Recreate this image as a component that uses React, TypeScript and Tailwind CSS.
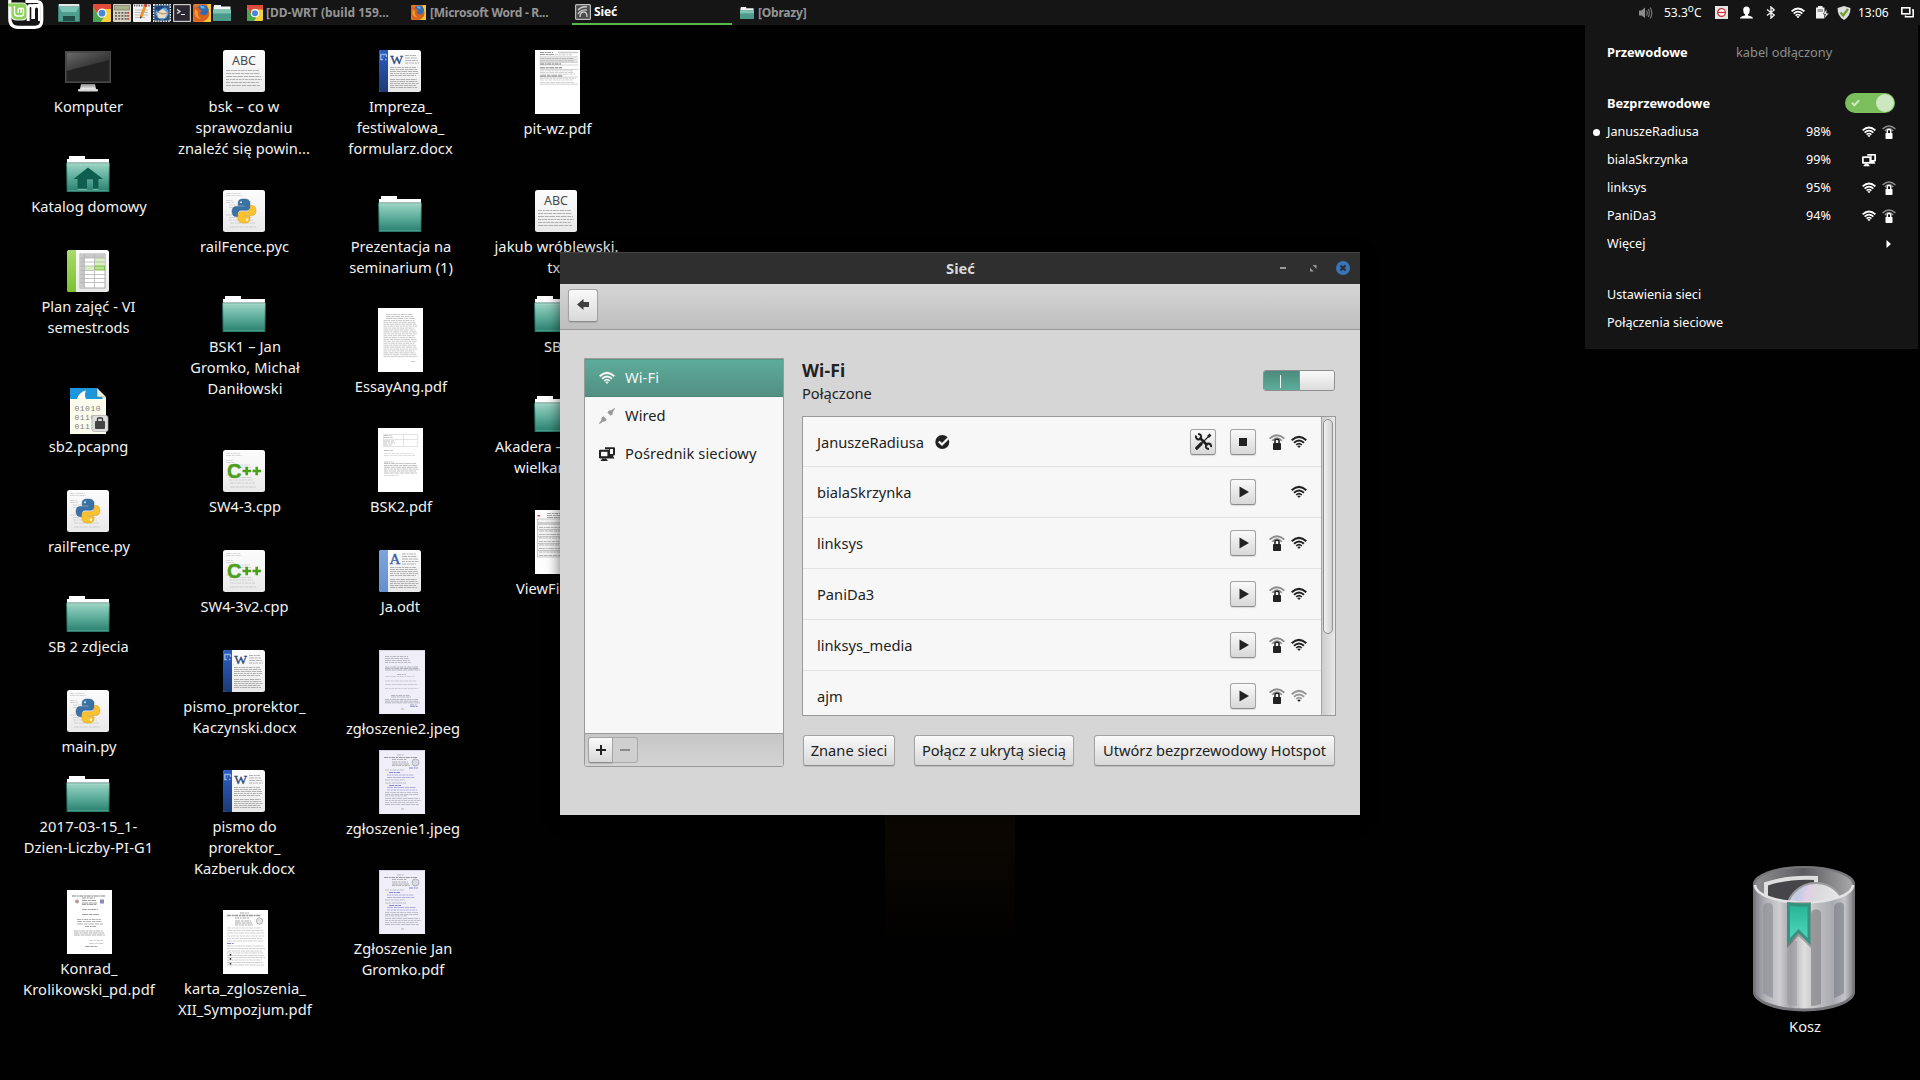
import type { ReactNode } from "react";

const DARK = "#222";

/* ---------- symbolic icons ---------- */

function Wifi({ size, color, weak = false }: { size: number; color: string; weak?: boolean }) {
  return (
    <svg width={size} height={size} viewBox="0 0 16 16" fill="none" stroke={color} className="shrink-0">
      <path d="M0.7 6.2 Q8 -0.4 15.3 6.2" strokeWidth="2.1" opacity={weak ? 0.45 : 1} />
      <path d="M3 8.7 Q8 4.2 13 8.7" strokeWidth="1.9" opacity={weak ? 0.45 : 1} />
      <path d="M5.2 11 Q8 8.4 10.8 11" strokeWidth="1.7" opacity={weak ? 0.45 : 1} />
      <path d="M6.2 12 L8 14 L9.8 12 Q8 10.8 6.2 12Z" fill={color} stroke="none" />
    </svg>
  );
}

function WifiLock({ size, color }: { size: number; color: string }) {
  return (
    <svg width={size} height={size} viewBox="0 0 16 16" fill="none" className="shrink-0">
      <path d="M0.6 4.6 Q8 -2.2 15.4 4.6" stroke={color} strokeWidth="1.8" opacity="0.5" />
      <path d="M3.2 6.8 Q8 1.4 12.8 6.8" stroke={color} strokeWidth="1.7" opacity="0.5" />
      <path d="M6 10 V6.2 Q6 5.2 8 5.2 Q10 5.2 10 6.2 V10" stroke={color} strokeWidth="1.6" />
      <rect x="4" y="9" width="8" height="7" rx="0.8" fill={color} />
    </svg>
  );
}

function Screens({ size, color, bg }: { size: number; color: string; bg: string }) {
  return (
    <svg width={size} height={size} viewBox="0 0 16 16" className="shrink-0">
      <path d="M6 1.2 H15 Q16 1.2 16 2.2 V8.6 Q16 9.6 15 9.6 H13.8 L15.4 12.4 H10 V3.2 H6Z" fill={color} />
      <rect x="11" y="3" width="3" height="5" fill={bg} />
      <rect x="0" y="3.8" width="10.4" height="8.6" rx="1.2" fill={color} />
      <rect x="2" y="5.8" width="6.4" height="4.4" fill={bg} />
      <path d="M3.4 12.4 H7 L9 15 H1.4Z" fill={color} />
    </svg>
  );
}

/* ---------- desktop icons ---------- */

function Folder({ home = false }: { home?: boolean }) {
  return (
    <svg width="46" height="37" viewBox="0 0 46 37">
      <defs>
        <linearGradient id="fold" x1="0" y1="0" x2="0" y2="1">
          <stop offset="0" stopColor="#9bd3c3" />
          <stop offset="0.5" stopColor="#5fae9c" />
          <stop offset="1" stopColor="#2c8170" />
        </linearGradient>
      </defs>
      <path d="M4 0 H20 V3 H44 V7 H2 V3 H4Z" fill="#fff" />
      <path d="M2 6 H44 V6.8 H2Z" fill="#c9c9c9" />
      <path d="M1 6.8 H45 L44.3 36 H1.7Z" fill="#2c7566" />
      <path d="M2 7.6 H44 L43.3 35 H2.7Z" fill="url(#fold)" />
      <path d="M2 7.9 H44" stroke="#b9e4d8" strokeWidth="0.8" />
      <path d="M3 34.6 H43" stroke="#51a996" strokeWidth="0.8" />
      {home && (
        <>
          <path d="M23 11.5 L38 23 H33.5 V33 H28 V24.5 H22 V33 H12.5 V23 H8.5Z" fill="#0f5f50" />
          <path d="M12.5 33.3 H22 M28 33.3 H33.5 M22 24 H28" stroke="#a5dccd" strokeWidth="0.7" fill="none" />
        </>
      )}
    </svg>
  );
}

function Monitor() {
  return (
    <svg width="46" height="41" viewBox="0 0 46 41">
      <defs>
        <linearGradient id="scr" x1="0" y1="0" x2="1" y2="1">
          <stop offset="0" stopColor="#6a6a6a" />
          <stop offset="0.6" stopColor="#3a3a3a" />
          <stop offset="1" stopColor="#262626" />
        </linearGradient>
        <linearGradient id="stand" x1="0" y1="0" x2="0" y2="1">
          <stop offset="0" stopColor="#888" />
          <stop offset="1" stopColor="#f2f2f2" />
        </linearGradient>
      </defs>
      <rect width="46" height="32" fill="#4a4a4a" />
      <rect x="1.5" y="1.5" width="43" height="29" fill="#222" />
      <path d="M1.5 1.5 H44.5 V9 L1.5 20Z" fill="url(#scr)" />
      <path d="M16 33 H30 L31 38 H15Z" fill="url(#stand)" />
      <rect x="13" y="38" width="20" height="2.4" rx="1" fill="#d8d8d8" />
    </svg>
  );
}

function Paper({ children, stripe }: { children: ReactNode; stripe?: [string, string] }) {
  return (
    <svg width="42" height="42" viewBox="0 0 42 42">
      <defs>
        <linearGradient id="pap" x1="0" y1="0" x2="0" y2="1">
          <stop offset="0" stopColor="#fdfdfd" />
          <stop offset="1" stopColor="#e9e9e9" />
        </linearGradient>
        {stripe && (
          <linearGradient id={"st" + stripe[0].slice(1)} x1="0" y1="0" x2="0" y2="1">
            <stop offset="0" stopColor={stripe[0]} />
            <stop offset="1" stopColor={stripe[1]} />
          </linearGradient>
        )}
      </defs>
      <rect width="42" height="42" rx="2.5" fill="url(#pap)" />
      {stripe && <path d="M9 0 H2.5 Q0 0 0 2.5 V39.5 Q0 42 2.5 42 H9Z" fill={`url(#st${stripe[0].slice(1)})`} />}
      {children}
    </svg>
  );
}

function Rows({ x, w, ys, color = "#a8a8a8", h = 0.9, seed = 1 }: { x: number; w: number; ys: number[]; color?: string; h?: number; seed?: number }) {
  return (
    <>
      {ys.map((y, i) => (
        <path key={y} d={`M${x} ${y} H${x + w - (((i + seed) * 7) % 4)}`} stroke={color} strokeWidth={h} strokeDasharray={`${3 + ((i * 5 + seed) % 4)} 0.7 ${2 + (i % 3)} 0.6`} />
      ))}
    </>
  );
}

function AbcIcon() {
  return (
    <Paper>
      <text x="21" y="15" textAnchor="middle" fontSize="12.5" fontFamily="Noto Sans, sans-serif" fill="#4a4a4a">ABC</text>
      <Rows x={3} w={36} ys={[20.5, 23.5, 26.5, 29.5, 32.5, 35.5]} />
    </Paper>
  );
}

function WordIcon() {
  return (
    <Paper stripe={["#2b5fc4", "#1d3a75"]}>
      <path d="M7.5 4.5 H1.8 V9.5 H4 M7.5 4.5 V7 M5 7 H4.5 M6 9.5 H7.5" stroke="#8fb0ea" strokeWidth="1.4" fill="none" />
      <text x="17.5" y="14" textAnchor="middle" fontSize="13.5" fontFamily="Liberation Serif, serif" fill="#27457f" stroke="#27457f" strokeWidth="0.3">W</text>
      <Rows x={26} w={14} ys={[5.5, 8, 10.5, 13]} h={0.8} color="#a0a0a0" />
      <Rows x={11} w={29} ys={[17.5, 19.5, 21.5, 23.5, 25.5, 29.5, 31.5, 33.5, 35.5, 37.5]} h={0.8} color="#a0a0a0" />
    </Paper>
  );
}

function OdtIcon() {
  return (
    <Paper stripe={["#7ea4de", "#6490d0"]}>
      <text x="16" y="14" textAnchor="middle" fontSize="15" fontFamily="Liberation Serif, serif" fill="#3561a8" stroke="#3561a8" strokeWidth="0.4">A</text>
      <Rows x={23} w={17} ys={[4, 6.5, 9, 11.5, 14]} h={0.8} color="#a0a0a0" />
      <Rows x={11} w={29} ys={[17.5, 19.5, 21.5, 23.5, 25.5, 29.5, 31.5, 33.5, 35.5, 37.5]} h={0.8} color="#a0a0a0" />
    </Paper>
  );
}

function OdsIcon() {
  return (
    <Paper stripe={["#a8dc6c", "#7dc02f"]}>
      <rect x="13" y="4" width="25" height="34" fill="#fff" stroke="#aaa" />
      <rect x="13.5" y="4.5" width="24" height="3.5" fill="#c6c6c6" />
      <rect x="13.5" y="8" width="4" height="29.5" fill="#c6c6c6" />
      <rect x="27.5" y="8" width="10" height="8" fill="#d8f0bd" />
      <rect x="17.5" y="16" width="10" height="4" fill="#d8f0bd" />
      <rect x="27.8" y="16" width="9.7" height="4" fill="#b6e38a" stroke="#6fae3a" strokeWidth="0.8" />
      <path d="M13 8 H38 M13 12 H38 M13 16 H27 M13 20.5 H27 M13 24.5 H38 M13 28.5 H38 M13 32.5 H38 M17.5 4 V38 M27.5 4 V38" stroke="#b5b5b5" strokeWidth="0.8" />
    </Paper>
  );
}

function CodeLines() {
  return (
    <g opacity="0.6">
      <Rows x={3} w={18} ys={[3.5, 5.5]} h={0.7} />
      <Rows x={3} w={10} ys={[10.5, 12.5, 25]} h={0.7} />
      <Rows x={6} w={24} ys={[15, 17.5, 27.5, 30]} h={0.7} />
      <Rows x={7} w={28} ys={[33, 37]} h={0.7} />
    </g>
  );
}

function PyIcon() {
  return (
    <Paper>
      <CodeLines />
      <g transform="translate(9 9)">
        <path d="M11.8 0 C7 0 6.2 1.8 6.2 4 V6.5 H12.5 V7.5 H4 C1.5 7.5 0 9.5 0 12.5 C0 15.5 1.5 17.5 4 17.5 H5.8 V14.5 C5.8 12.5 7.3 11.2 9.2 11.2 H15 C17 11.2 18 10 18 8 V4 C18 1.5 16 0 11.8 0Z" fill="#3a72a5" stroke="#2a5a88" strokeWidth="0.5" />
        <path d="M12.2 24 C17 24 17.8 22.2 17.8 20 V17.5 H11.5 V16.5 H20 C22.5 16.5 24 14.5 24 11.5 C24 8.5 22.5 6.5 20 6.5 H18.2 V9.5 C18.2 11.5 16.7 12.8 14.8 12.8 H9 C7 12.8 6 14 6 16 V20 C6 22.5 8 24 12.2 24Z" fill="#fcc331" stroke="#d9961c" strokeWidth="0.5" />
        <circle cx="9" cy="3.3" r="1" fill="#d9e7f4" />
        <circle cx="15" cy="20.7" r="1.2" fill="#fff6d8" />
      </g>
    </Paper>
  );
}

function CppIcon() {
  return (
    <Paper>
      <CodeLines />
      <text x="4" y="28" fontSize="20" fontWeight="700" fontFamily="Liberation Sans, sans-serif" fill="#4ba01a" stroke="#4ba01a" strokeWidth="0.4">C</text>
      <path d="M19.5 21 H28 M23.7 16.8 V25.2 M29.5 21 H38 M33.7 16.8 V25.2" stroke="#4ba01a" strokeWidth="2.6" />
    </Paper>
  );
}

function PcapIcon() {
  return (
    <svg width="40" height="46" viewBox="0 0 40 46">
      <path d="M0 0 H27 L36 9 V46 H0Z" fill="#fdfdee" />
      <path d="M0 0 H27 L33 11 H0Z" fill="#1e96dc" />
      <path d="M7 11 Q9 4 16 2.5 Q14 7 16 11Z" fill="#fff" />
      <path d="M27 0 V9 H36Z" fill="#e8f0dc" stroke="#555" strokeWidth="0.4" />
      <g fontFamily="Liberation Mono, monospace" fontSize="8" fill="#7d7d7d">
        <text x="4.5" y="22.5" textLength="26">01010</text>
        <text x="4.5" y="31.5" textLength="26">01101</text>
        <text x="4.5" y="40.5" textLength="26">01110</text>
      </g>
      <rect x="22" y="27.5" width="16" height="16" rx="2" fill="#dedede" stroke="#aaa" strokeWidth="0.7" />
      <path d="M27.5 34 V31 Q27.5 30 28.5 30 H31.5 Q32.5 30 32.5 31 V34" stroke="#333" strokeWidth="1.3" fill="none" />
      <rect x="25" y="33" width="10" height="8" rx="1" fill="#444" />
    </svg>
  );
}

type ThumbKind = "konrad" | "karta" | "essay" | "bsk" | "pit" | "view" | "scan2" | "scan1";

const range = (a: number, b: number, s: number) => {
  const r: number[] = [];
  for (let v = a; v <= b; v += s) r.push(Math.round(v * 10) / 10);
  return r;
};

function Thumb({ kind }: { kind: ThumbKind }) {
  const scan = kind === "scan1" || kind === "scan2";
  const w = scan ? 46 : 45;
  return (
    <svg width={w} height="64" viewBox={`0 0 ${w} 64`}>
      <rect width={w} height="64" fill={scan ? "#efeef9" : "#fff"} />
      {scan && <path d={`M0 0.5 H${w} M0.5 0 V64`} stroke="#d4d3e2" />}
      {kind === "konrad" && (
        <>
          <Rows x={5} w={36} ys={[6]} h={1.3} color="#aaa" />
          <Rows x={15} w={16} ys={[8, 10.5, 13]} h={1} color="#999" />
          <circle cx="10" cy="11.5" r="2" fill="#b99" />
          <rect x="33" y="9.5" width="4" height="4" fill="#88b" />
          <Rows x={15} w={18} ys={[14.5, 19.5, 24.5]} h={0.9} color="#999" />
          <Rows x={10} w={27} ys={[29.5, 31.5, 34]} h={1} color="#b0b0b0" />
          <Rows x={18} w={14} ys={[36.5, 56.5]} h={1} color="#a5a5a5" />
          <Rows x={7} w={32} ys={[41, 43, 45]} h={1} color="#b0b0b0" />
          <Rows x={22} w={17} ys={[50.5, 53.5]} h={0.7} color="#bbb" />
        </>
      )}
      {kind === "essay" && (
        <>
          <Rows x={8} w={30} ys={[6.5, 8.5, 10.5]} h={1.1} color="#c4c4c4" />
          <Rows x={5.5} w={34} ys={range(12.5, 50, 1.9)} h={1} color="#c8c8c8" />
          <Rows x={33} w={8} ys={[53.5]} h={0.8} color="#bbb" />
        </>
      )}
      {kind === "bsk" && (
        <>
          <path d="M5.5 6.5 H39.5 V18.5 H5.5Z M25.5 6.5 V18.5 M5.5 11.5 H39.5" stroke="#d2d2d2" strokeWidth="0.6" fill="none" />
          <Rows x={6} w={11} ys={[7.5, 9.5, 13, 15, 17, 22.5, 34]} h={0.7} color="#aaa" />
          <Rows x={6} w={33} ys={[25.5, 27.5]} h={0.7} color="#d0d0d0" />
          <Rows x={6} w={35} ys={[35.5, 37.5, 39.3, 41.1, 43, 45]} h={1} color="#c0c0c0" />
          <Rows x={6} w={18} ys={[47.5]} h={0.7} color="#c9c9c9" />
        </>
      )}
      {kind === "pit" && (
        <>
          <Rows x={5} w={16} ys={[2.5, 4.5]} h={0.9} color="#888" />
          <rect x="23" y="1.7" width="20" height="1.6" fill="#ccc" />
          <Rows x={12} w={28} ys={[4.8]} h={0.8} color="#bbb" />
          <rect x="4.5" y="7.5" width="38" height="4.5" fill="#e2e2e2" />
          <Rows x={5} w={36} ys={[8.5, 10.8]} h={0.8} color="#b0b0b0" />
          <path d="M4.5 6.8 H43 M4.5 12.5 H43 M4.5 15 H43 M4.5 19.5 H43 M4.5 27 H43 M4.5 34.2 H43" stroke="#b5b5b5" strokeWidth="0.6" />
          <Rows x={5} w={24} ys={[14, 17.8, 26]} h={1} color="#777" />
          <Rows x={5} w={36} ys={[20.8, 22.5, 24.2, 28.4, 30, 32.5]} h={0.7} color="#bbb" />
        </>
      )}
      {kind === "view" && (
        <>
          <rect x="2.5" y="9" width="40" height="38" fill="#f5f5f5" stroke="#aaa" strokeWidth="0.6" />
          <Rows x={12} w={28} ys={[3.5, 5.5, 7.5]} h={0.9} color="#999" />
          <rect x="2.5" y="12" width="40" height="3" fill="#d0d0d0" />
          <Rows x={4} w={37} ys={[17.5, 21, 24.5, 28, 31.5, 35, 38.5, 42, 45.5]} h={1} color="#b5b5b5" />
          <path d="M3 19.5 H42 M3 26.5 H42 M3 33.5 H42 M3 40.5 H42" stroke="#999" strokeWidth="0.5" />
          <rect x="2.5" y="5" width="2.5" height="1.5" fill="#d44" />
        </>
      )}
      {kind === "karta" && (
        <>
          <Rows x={17} w={12} ys={[3]} h={0.9} color="#999" />
          <Rows x={4} w={37} ys={[5.5]} h={1.3} color="#999" />
          <Rows x={12} w={18} ys={[8, 11, 13, 15]} h={1} color="#aaa" />
          <circle cx="36.5" cy="11" r="3.2" fill="#e4e4e4" stroke="#aaa" strokeWidth="0.8" />
          <Rows x={4} w={38} ys={[18, 20.5, 23, 26, 28.5, 31, 36, 38.5, 41, 43, 45.5, 47.5, 50, 52.5, 55]} h={0.8} color="#c0c0c0" />
          <Rows x={4} w={10} ys={[33.5]} h={1.1} color="#88c" />
          <path d="M7.5 44 V45.5 M7.5 48 V49.8 M7.5 53 V54.5" stroke="#222" strokeWidth="1.4" />
        </>
      )}
      {kind === "scan2" && (
        <>
          <Rows x={6} w={26} ys={[6.5, 8.5, 10.5, 12.5]} h={0.8} color="#aaaab4" />
          <Rows x={6} w={36} ys={[17, 18.5, 20]} h={1.1} color="#b2b2bc" />
          <Rows x={18} w={12} ys={[24.5]} h={0.8} color="#aaaab4" />
          <Rows x={6} w={33} ys={[26.5, 31, 34.5, 38.5]} h={0.7} color="#bcbcc6" />
          <Rows x={12} w={22} ys={[45.5, 47]} h={0.8} color="#aaaab4" />
          <Rows x={6} w={36} ys={[49.5, 51.2, 52.8]} h={0.9} color="#b2b2bc" />
          <Rows x={31} w={10} ys={[55, 56.5]} h={0.9} color="#99c" />
        </>
      )}
      {kind === "scan1" && (
        <>
          <Rows x={18} w={10} ys={[5]} h={0.8} color="#aaa" />
          <Rows x={5} w={36} ys={[7.5]} h={1.1} color="#999" />
          <Rows x={13} w={18} ys={[9.5, 12, 14, 15.5]} h={0.9} color="#aaa" />
          <circle cx="36.5" cy="12.5" r="3.5" fill="#d9d9e2" stroke="#aab" strokeWidth="0.9" />
          <Rows x={30} w={12} ys={[18]} h={1} color="#88c" />
          <Rows x={6} w={22} ys={[20, 30, 33, 46]} h={0.8} color="#b0b0ba" />
          <Rows x={10} w={14} ys={[22.5, 35.5]} h={1} color="#88c" />
          <Rows x={8} w={30} ys={[25, 27.5, 37.5, 40]} h={0.9} color="#a8a8d4" />
          <Rows x={6} w={36} ys={[42.5, 44.5, 48.5, 50.5, 52.5, 54.5]} h={0.8} color="#b0b0ba" />
        </>
      )}
      {scan && <path d="M22 59 H25" stroke="#aaa" strokeWidth="0.8" />}
    </svg>
  );
}

function TrashBin() {
  return (
    <svg width="102" height="146" viewBox="0 0 102 146">
      <defs>
        <linearGradient id="bin" x1="0" y1="0" x2="1" y2="0">
          <stop offset="0" stopColor="#85868b" />
          <stop offset="0.1" stopColor="#b0b0b6" />
          <stop offset="0.25" stopColor="#cfcfd2" />
          <stop offset="0.36" stopColor="#a4a4a9" />
          <stop offset="0.5" stopColor="#e0e0e1" />
          <stop offset="0.62" stopColor="#c2c2c5" />
          <stop offset="0.8" stopColor="#a9aab0" />
          <stop offset="0.92" stopColor="#c4c4c8" />
          <stop offset="1" stopColor="#8b8b90" />
        </linearGradient>
        <linearGradient id="inner" x1="0" y1="0" x2="1" y2="0">
          <stop offset="0" stopColor="#8e8e90" />
          <stop offset="0.5" stopColor="#5c5c60" />
          <stop offset="1" stopColor="#a8a8aa" />
        </linearGradient>
        <linearGradient id="disc" x1="0" y1="0" x2="1" y2="0.3">
          <stop offset="0" stopColor="#d7d7dc" />
          <stop offset="0.25" stopColor="#c3cbe4" />
          <stop offset="0.38" stopColor="#e6cfe4" />
          <stop offset="0.5" stopColor="#d9d9dd" />
          <stop offset="1" stopColor="#ececec" />
        </linearGradient>
        <linearGradient id="rib" x1="0" y1="0" x2="0" y2="1">
          <stop offset="0" stopColor="#27b597" />
          <stop offset="1" stopColor="#4fd6bb" />
        </linearGradient>
        <clipPath id="mouth">
          <path d="M3 18 A48 16 0 0 1 99 18 V19 A48 17 0 0 1 3 19Z" />
        </clipPath>
      </defs>
      <path d="M0 18 A51 18 0 0 1 102 18 V126 A51 19.5 0 0 1 0 126Z" fill="#77777b" />
      <path d="M2.5 18 V125 A48.5 17.5 0 0 0 99.5 125 V18Z" fill="url(#bin)" />
      <ellipse cx="51" cy="19" rx="48.5" ry="17" fill="url(#inner)" />
      <g clipPath="url(#mouth)">
        <path d="M13 40 V18 Q35 10.5 63 12 V40" fill="#45454a" stroke="#dedede" strokeWidth="4" />
        <circle cx="63" cy="47" r="30" fill="url(#disc)" stroke="#9b9b9e" strokeWidth="2" />
      </g>
      <path d="M2 19 A49 17.5 0 0 0 100 19" fill="none" stroke="#e4e4e6" strokeWidth="2.5" />
      <path d="M10 42 Q10 37 15 37 Q20 37 20 42 V132 Q14 130 10 127Z" fill="#8e8f96" opacity="0.65" />
      <path d="M58 48 Q58 43.5 63 43.5 Q68 43.5 68 48 V138 Q62 140 58 140Z" fill="#858589" opacity="0.7" />
      <path d="M34 75 H44 V140 Q38 139 34 138Z" fill="#9a9a9e" opacity="0.5" />
      <path d="M81 42 Q81 37 86 36.5 Q91 36 91 40 V127 Q87 130 81 132Z" fill="#7d7f88" opacity="0.65" />
      <path d="M34 36 H58 V82 L45.5 70 L34 82Z" fill="#000" opacity="0.25" />
      <path d="M34 36 Q45 38 57.5 37 V79 L45.5 67 L34 79Z" fill="#37917f" />
      <path d="M37 40 Q45 41 54.5 40.5 V72 L45.5 63 L37 72Z" fill="url(#rib)" />
    </svg>
  );
}

/* ---------- desktop items ---------- */

type Item = { x: number; y: number; cx: number; base: number; lines: string[]; starts?: number[]; track?: number; icon: ReactNode };

const ITEMS: Item[] = [
  { x: 65, y: 51, cx: 88.5, base: 112, lines: ["Komputer"], icon: <Monitor /> },
  { x: 65, y: 156, cx: 89, base: 212, lines: ["Katalog domowy"], icon: <Folder home /> },
  { x: 67, y: 250, cx: 88.5, base: 312, lines: ["Plan zajęć - VI", "semestr.ods"], icon: <OdsIcon /> },
  { x: 70, y: 388, cx: 88.5, base: 452, lines: ["sb2.pcapng"], icon: <PcapIcon /> },
  { x: 67, y: 490, cx: 89, base: 552, lines: ["railFence.py"], icon: <PyIcon /> },
  { x: 65, y: 596, cx: 88.5, base: 652, lines: ["SB 2 zdjecia"], icon: <Folder /> },
  { x: 67, y: 690, cx: 89, base: 752, lines: ["main.py"], icon: <PyIcon /> },
  { x: 65, y: 776, cx: 88.5, base: 832, track: 0.13, lines: ["2017-03-15_1-", "Dzien-Liczby-PI-G1"], icon: <Folder /> },
  { x: 67, y: 890, cx: 89, base: 974, track: 0.15, lines: ["Konrad_", "Krolikowski_pd.pdf"], icon: <Thumb kind="konrad" /> },
  { x: 223, y: 50, cx: 244, base: 112, track: 0.08, lines: ["bsk – co w", "sprawozdaniu", "znaleźć się powin..."], icon: <AbcIcon /> },
  { x: 223, y: 190, cx: 244.5, base: 252, lines: ["railFence.pyc"], icon: <PyIcon /> },
  { x: 221, y: 296, cx: 245, base: 352, track: 0.08, lines: ["BSK1 – Jan", "Gromko, Michał", "Daniłowski"], icon: <Folder /> },
  { x: 223, y: 450, cx: 245, base: 512, lines: ["SW4-3.cpp"], icon: <CppIcon /> },
  { x: 223, y: 550, cx: 244.5, base: 612, lines: ["SW4-3v2.cpp"], icon: <CppIcon /> },
  { x: 223, y: 650, cx: 244.5, base: 712, track: 0.08, lines: ["pismo_prorektor_", "Kaczynski.docx"], icon: <WordIcon /> },
  { x: 223, y: 770, cx: 244.5, base: 832, lines: ["pismo do", "prorektor_", "Kazberuk.docx"], icon: <WordIcon /> },
  { x: 223, y: 910, cx: 245, base: 994, track: 0.08, lines: ["karta_zgloszenia_", "XII_Sympozjum.pdf"], icon: <Thumb kind="karta" /> },
  { x: 379, y: 50, cx: 400.5, base: 112, lines: ["Impreza_", "festiwalowa_", "formularz.docx"], icon: <WordIcon /> },
  { x: 377, y: 196, cx: 401, base: 252, lines: ["Prezentacja na", "seminarium (1)"], icon: <Folder /> },
  { x: 378, y: 308, cx: 401, base: 392, lines: ["EssayAng.pdf"], icon: <Thumb kind="essay" /> },
  { x: 378, y: 428, cx: 401, base: 512, lines: ["BSK2.pdf"], icon: <Thumb kind="bsk" /> },
  { x: 379, y: 550, cx: 400.5, base: 612, lines: ["Ja.odt"], icon: <OdtIcon /> },
  { x: 379, y: 650, cx: 403, base: 734, lines: ["zgłoszenie2.jpeg"], icon: <Thumb kind="scan2" /> },
  { x: 379, y: 750, cx: 403, base: 834, lines: ["zgłoszenie1.jpeg"], icon: <Thumb kind="scan1" /> },
  { x: 379, y: 870, cx: 403, base: 954, lines: ["Zgłoszenie Jan", "Gromko.pdf"], icon: <Thumb kind="scan1" /> },
  { x: 535, y: 50, cx: 557.5, base: 134, lines: ["pit-wz.pdf"], icon: <Thumb kind="pit" /> },
  { x: 535, y: 190, cx: 556.5, base: 252, track: 0.08, lines: ["jakub wróblewski.", "txt"], icon: <AbcIcon /> },
  { x: 533, y: 296, cx: 556.5, base: 352, lines: ["SB"], starts: [544], icon: <Folder /> },
  { x: 533, y: 396, cx: 556.5, base: 452, lines: ["Akadera –", "wielkan"], starts: [495, 514], icon: <Folder /> },
  { x: 535, y: 510, cx: 556.5, base: 594, lines: ["ViewFi"], starts: [516], icon: <Thumb kind="view" /> },
  { x: 1753, y: 866, cx: 1805, base: 1032, lines: ["Kosz"], icon: <TrashBin /> },
];

function DesktopItem({ item }: { item: Item }) {
  return (
    <>
      <div className="absolute" style={{ left: item.x, top: item.y }}>{item.icon}</div>
      {item.lines.map((line, i) => (
        <div
          key={line}
          className={item.starts ? "absolute whitespace-pre text-[14.67px] leading-[21px] text-[#f2f2f2]" : "absolute -translate-x-1/2 whitespace-pre text-[14.67px] leading-[21px] text-[#f2f2f2]"}
          style={{ left: item.starts ? item.starts[i] : item.cx, top: item.base - 16 + i * 21, letterSpacing: item.track }}
        >
          {line}
        </div>
      ))}
    </>
  );
}

/* ---------- top panel ---------- */

function MintLogo() {
  return (
    <svg width="36" height="30" viewBox="0 0 36 30">
      <path d="M1.800 -3 V18 Q1.800 27.300 10 27.300 H27 Q33.700 27.300 33.700 20.500 V7 Q33.700 1.500 28 1.500 H19 V-3Z" fill="#151515" stroke="#fff" strokeWidth="3.200" />
      <path d="M20.200 19 V8 Q20.200 5.500 22.500 5.500 Q24.800 5.500 24.800 8 V19 M20.200 17 V21" fill="none" stroke="#fff" strokeWidth="3" />
      <path d="M24.500 4 H32 V21 H30 V9.500 Q30 7.500 28.500 7.500 Q27 7.500 27 9.500 V19 H24.500Z" fill="#fff" />
      <path d="M-1 3 H14 Q19 3 19 8 V15 Q19 20 14 20 H9 Q3 20 3 14 V7 H-1Z" fill="#8ed05c" stroke="#e9f6df" strokeWidth="1.200" />
      <path d="M6.500 6 V13 Q6.500 16 9.500 16 H13 Q15.500 16 15.500 13.500 V9.500 Q15.500 8.300 14.200 8.300 Q13 8.300 13 9.500 V13 M13 9.500 Q13 8.300 11.500 8.300 Q10.200 8.300 10.200 9.500 V13" fill="none" stroke="#fff" strokeWidth="1.400" />
    </svg>
  );
}

function ShowDesktop() {
  return (
    <svg width="22" height="18" viewBox="0 0 22 18">
      <rect width="22" height="18" rx="1" fill="#3b7d70" />
      <rect x="1" y="0" width="20" height="2.5" fill="#e6e6e6" />
      <rect x="1" y="3" width="20" height="14" fill="#4f9f8e" />
      <path d="M1 3 H21 L18 8 H4Z" fill="#7cc4b3" />
      <rect x="5" y="12" width="12" height="5" fill="#1f4d45" />
    </svg>
  );
}

function Chrome({ size }: { size: number }) {
  return (
    <svg width={size} height={size} viewBox="0 0 18 18">
      <rect width="18" height="18" rx="1.5" fill="#f7cf3a" />
      <path d="M0 1.5 Q0 0 1.5 0 H16.5 Q18 0 18 1.5 V5 H9 L4.5 10 L0 3Z" fill="#e04b3b" />
      <path d="M0 3 L5 11 L11 13 L8 18 H1.5 Q0 18 0 16.5Z" fill="#4aa552" />
      <circle cx="9" cy="9.2" r="4.6" fill="#fff" />
      <circle cx="9" cy="9.2" r="3.4" fill="#4a86d8" />
    </svg>
  );
}

function Firefox({ size }: { size: number }) {
  return (
    <svg width={size} height={size} viewBox="0 0 18 18">
      <rect width="18" height="18" rx="1.5" fill="#e3762b" />
      <path d="M14 0 H18 V18 H10 Q17 14 14 0Z" fill="#f6c437" />
      <circle cx="9.5" cy="7" r="6.3" fill="#2f6cb4" />
      <path d="M7 1.5 Q11 1 12 4 Q10 5 8 4Z" fill="#6fb2e4" />
      <path d="M0 2 Q2 3 4 3 Q7 5 9 7 Q7 8 7 9.5 Q9 12 13 11 Q15 9.5 15.5 6 Q18 14 11 17 H3 Q0 14 0 10Z" fill="#d9601d" />
      <path d="M2 5 Q4 6 5 8 Q4 12 8 15 Q3 15 1.5 10Z" fill="#f19a2c" />
    </svg>
  );
}

function Calculator() {
  return (
    <svg width="18" height="18" viewBox="0 0 18 18">
      <rect width="18" height="18" rx="1" fill="#d9d2c3" />
      <rect x="1.5" y="1.5" width="15" height="4.5" fill="#a8b48c" stroke="#6f6b60" strokeWidth="0.6" />
      {[8, 11, 14].map((y) => [2, 5.2, 8.4, 11.6, 14.2].map((x) => <rect key={`${x}-${y}`} x={x} y={y} width="2" height="1.8" fill={x > 13 ? "#b4524a" : "#6a665e"} />))}
    </svg>
  );
}

function Editor() {
  return (
    <svg width="18" height="18" viewBox="0 0 18 18">
      <rect width="18" height="18" rx="1" fill="#f2f2f2" />
      <path d="M1 1.5 H17" stroke="#555" strokeWidth="2" strokeDasharray="1.2 1.2" />
      <path d="M2 6 H15 M2 8.5 H15 M2 11 H15 M2 13.5 H12" stroke="#b5b5b5" strokeWidth="0.9" />
      <path d="M12.5 1 L8 13" stroke="#f0922b" strokeWidth="2.8" />
      <path d="M7 15 L7.2 12.2 L9 13Z" fill="#333" />
      <path d="M13 0 L12.2 2.5" stroke="#c83c3c" strokeWidth="2.8" />
    </svg>
  );
}

function Mail() {
  return (
    <svg width="18" height="18" viewBox="0 0 18 18">
      <rect x="0.7" y="0.7" width="16.6" height="16.6" fill="#2d4f7c" stroke="#e8e8e8" strokeWidth="1.4" strokeDasharray="1.6 1" />
      <circle cx="9" cy="9" r="6.5" fill="#5ea1dc" />
      <path d="M4 8 L10 5 L14.500 9 L12 14 L5.5 14Z" fill="#ecdcc2" />
      <path d="M4 8 L10 10 L14.5 9" stroke="#9c8562" strokeWidth="0.9" fill="none" />
      <path d="M2 4 Q7 0 13 3 Q8 4 5 8Z" fill="#1c4379" />
    </svg>
  );
}

function Terminal() {
  return (
    <svg width="18" height="18" viewBox="0 0 18 18">
      <rect width="18" height="18" rx="1" fill="#c9c9c9" />
      <rect x="1.2" y="1.2" width="15.6" height="15.6" fill="#2c2733" />
      <path d="M4 5.5 L7 7.5 L4 9.5 M8 10.5 H12" stroke="#eee" strokeWidth="1.2" fill="none" />
    </svg>
  );
}

function MiniFolder({ w, h }: { w: number; h: number }) {
  return (
    <svg width={w} height={h} viewBox="0 0 18 16" preserveAspectRatio="none">
      <path d="M1 0 H8 V1.5 H17.5 V5 H0.5 V1.5 H1Z" fill="#f2f2f2" />
      <path d="M0 4.5 H18 V16 H0Z" fill="#4c9b8a" />
      <path d="M0 4.5 H18 V8.5 H0Z" fill="#7fc3b2" />
    </svg>
  );
}

function NetTool() {
  return (
    <svg width="16" height="16" viewBox="0 0 16 16">
      <rect x="0.6" y="0.6" width="14.8" height="14.8" rx="1" fill="#4b4b4b" stroke="#bdbdbd" strokeWidth="1.2" />
      <path d="M3 6 Q7 2 12 3 M3 10 Q6 5 12 6 M5 13 Q5 8 9 8 Q12 8 12 13" stroke="#c9c9c9" strokeWidth="1.4" fill="none" />
    </svg>
  );
}

function Panel() {
  return (
    <header className="absolute inset-x-0 top-0 flex h-[25px] items-center bg-[#151515] text-[12px] text-white">
      <div className="ml-[8px] h-[25px] w-[36px] shrink-0"><MintLogo /></div>
      <div className="ml-[14px]"><ShowDesktop /></div>
      <nav className="ml-[13px] flex items-center gap-[2px]">
        <Chrome size={18} />
        <Calculator />
        <Editor />
        <Mail />
        <Terminal />
        <Firefox size={18} />
        <MiniFolder w={18} h={16} />
      </nav>
      <div className="ml-[16px] flex h-[25px] w-[164px] items-center gap-[3px] whitespace-nowrap font-bold text-[#959595]">
        <Chrome size={16} />
        <span className="leading-[25px]">[DD-WRT (build 159...</span>
      </div>
      <div className="flex h-[25px] w-[161px] items-center gap-[4px] whitespace-nowrap font-bold text-[#959595]">
        <Firefox size={15} />
        <span className="leading-[25px] tracking-[-0.25px]">[Microsoft Word - R...</span>
      </div>
      <div className="flex h-[25px] w-[160px] items-center gap-[3px] border-b-2 border-[#55b849] pl-[3px] font-bold">
        <NetTool />
        <span className="pt-[1px] leading-[24px] tracking-[-0.1px]">Sieć</span>
      </div>
      <div className="ml-[8px] flex items-center gap-[4px] font-bold text-[#959595]">
        <MiniFolder w={14} h={12} />
        <span className="leading-[25px] tracking-[-0.2px]">[Obrazy]</span>
      </div>
      <div className="ml-auto flex h-[25px] items-center pr-[6px]">
        <svg width="14" height="14" viewBox="0 0 14 14" className="mr-[11px]" fill="none" stroke="#777" strokeWidth="1.2">
          <path d="M0 4.5 H2.5 L6 1.5 V12 L2.5 9.5 H0Z" fill="#8c8c8c" stroke="none" />
          <path d="M7.5 4.5 Q9 7 7.5 9.5 M9.3 3 Q11.5 7 9.3 11 M11.2 1.5 Q14.5 7 11.2 12.5" />
        </svg>
        <span className="flex w-[51px] leading-[25px]">53.3<span className="-mt-[4px] text-[10px]">o</span>C</span>
        <svg width="13" height="13" viewBox="0 0 13 13" className="mr-[12px]">
          <rect width="13" height="13" fill="#e4e4e4" />
          <circle cx="6.5" cy="6.5" r="3.900" fill="#fff" stroke="#c83232" strokeWidth="1.2" />
          <path d="M3 6.5 H10" stroke="#c83232" strokeWidth="1.3" />
        </svg>
        <svg width="13" height="13" viewBox="0 0 13 13" fill="#fff" className="mr-[13px]">
          <path d="M6.5 0.5 Q9.8 0.5 9.8 4 Q9.8 7 8 8.5 V9.5 Q13 10.5 13 12.5 H0 Q0 10.5 5 9.5 V8.5 Q3.2 7 3.2 4 Q3.2 0.5 6.5 0.5Z" />
        </svg>
        <svg width="10" height="13" viewBox="0 0 10 13" fill="none" stroke="#eee" strokeWidth="1.4" className="mr-[15px]">
          <path d="M1 3.5 L8.2 9 L5 12 V1 L8.2 4 L1 9.5" />
        </svg>
        <div className="mr-[11px]"><Wifi size={14} color="#fff" /></div>
        <svg width="13" height="13" viewBox="0 0 13 13" className="mr-[8px]">
          <path d="M2 1.5 V0 H6.5 V1.5 H8.5 V12.5 H0 V1.5Z" fill="#f2f2f2" />
          <path d="M1.5 3 H7 V6 H1.5Z" fill="#a5a5a5" />
          <path d="M11 3 L7 8 H9.5 L8.5 12.5 L13 7.2 H10.5Z" fill="#fff" stroke="#151515" strokeWidth="0.5" />
        </svg>
        <svg width="14" height="14" viewBox="0 0 14 14" className="mr-[7px]">
          <path d="M7 0 L13.5 2 Q13.5 10.5 7 14 Q0.5 10.5 0.5 2Z" fill="#dedede" />
          <path d="M3.5 6.5 L6.2 9.5 L11 3" stroke="#6f9b2f" strokeWidth="2.2" fill="none" />
        </svg>
        <span className="w-[43px] leading-[25px]">13:06</span>
        <svg width="13" height="11" viewBox="0 0 13 11" fill="none" stroke="#fff" strokeWidth="1.6">
          <rect x="0.8" y="0.8" width="8" height="6" />
          <path d="M11 3 H12.2 V9.7 H4.5 V8.5" />
        </svg>
      </div>
    </header>
  );
}

/* ---------- network applet menu ---------- */

const NETS: { name: string; pct: string; adhoc?: boolean; active?: boolean }[] = [
  { name: "JanuszeRadiusa", pct: "98%", active: true },
  { name: "bialaSkrzynka", pct: "99%", adhoc: true },
  { name: "linksys", pct: "95%" },
  { name: "PaniDa3", pct: "94%" },
];

function AppletMenu() {
  return (
    <aside className="absolute left-[1585px] top-[25px] flex h-[324px] w-[333px] flex-col bg-[#151515] pl-[22px] pt-[14px] text-[12.6px] text-white">
      <div className="flex h-[28px] items-center text-[12.8px] font-bold">
        <span className="w-[129px]">Przewodowe</span>
        <span className="font-normal text-[#8c8c8c]">kabel odłączony</span>
      </div>
      <div className="mt-[23px] flex h-[28px] items-center justify-between pr-[23px] text-[12.8px] font-bold">
        <span>Bezprzewodowe</span>
        <div className="mb-[2px] flex h-[20px] w-[50px] items-center justify-between rounded-full bg-[#7bbf5c] pl-[6px] pr-[1px]">
          <svg width="9" height="8" viewBox="0 0 9 8" fill="none" stroke="#cfe8c4" strokeWidth="2">
            <path d="M0.8 3.8 L3.4 6.3 L8.2 1.2" />
          </svg>
          <div className="size-[18px] rounded-full bg-[#cde7c1]" />
        </div>
      </div>
      {NETS.map((n) => (
        <div key={n.name} className="relative flex h-[28px] items-center">
          {n.active && <div className="absolute -left-[14px] top-[11px] size-[7px] rounded-full bg-white" />}
          <span className="w-[199px]">{n.name}</span>
          <span className="w-[56px]">{n.pct}</span>
          {n.adhoc ? (
            <Screens size={14} color="#fff" bg="#151515" />
          ) : (
            <>
              <Wifi size={14} color="#fff" />
              <div className="ml-[6px]"><WifiLock size={14} color="#fff" /></div>
            </>
          )}
        </div>
      ))}
      <div className="flex h-[28px] items-center justify-between pr-[27px]">
        <span>Więcej</span>
        <svg width="5" height="8" viewBox="0 0 5 8"><path d="M0.5 0 L5 4 L0.5 8Z" fill="#fff" /></svg>
      </div>
      <div className="mt-[23px] flex h-[28px] items-center">Ustawienia sieci</div>
      <div className="flex h-[28px] items-center">Połączenia sieciowe</div>
    </aside>
  );
}

/* ---------- network settings window ---------- */

function Plug() {
  return (
    <svg width="16" height="16" viewBox="0 0 16 16" fill="#9a9a9a">
      <path d="M15.5 0 L16 0.8 L14 3.5 L13.5 6.5 L11.5 7.8 L8.5 4.5 L9.5 2.7 L12.5 2Z" />
      <path d="M0 15.3 L0.8 16 L3.3 13.9 L6.5 13.3 L7.7 11.5 L4.6 8.3 L2.7 9.5 L2.1 12.5Z" />
    </svg>
  );
}

function Tools() {
  return (
    <svg width="17" height="17" viewBox="0 0 17 17" fill="none" stroke={DARK}>
      <path d="M4.5 4.5 L12.5 12.5" strokeWidth="2.6" />
      <path d="M1 2.5 Q0.5 5.5 3 6.5 Q6.5 6.5 6 3 Q5.5 1 3 1" strokeWidth="2" />
      <path d="M16 14 Q16.5 11.5 14 10.5 Q10.5 10.5 11 14 Q11.5 16 14 16" strokeWidth="2" />
      <path d="M6 10.8 L1.8 15.2" strokeWidth="3.2" strokeLinecap="round" />
      <path d="M6 11 L15 2" strokeWidth="1.1" />
      <path d="M13 4 L15.5 1.5" strokeWidth="2.6" />
    </svg>
  );
}

const BTN = "flex items-center justify-center rounded-[3px] border border-[#a3a3a3] border-b-[#8c8c8c] bg-linear-to-b from-[#fafafa] to-[#d8d8d8] shadow-[0_1px_1px_rgba(0,0,0,0.12)]";

function IconButton({ children }: { children: ReactNode }) {
  return <button className={`${BTN} size-[26px] shrink-0`}>{children}</button>;
}

const ROWS: { name: string; active?: boolean; open?: boolean; weak?: boolean }[] = [
  { name: "JanuszeRadiusa", active: true },
  { name: "bialaSkrzynka", open: true },
  { name: "linksys" },
  { name: "PaniDa3" },
  { name: "linksys_media" },
  { name: "ajm", weak: true },
];

function NetworkRow({ row }: { row: (typeof ROWS)[number] }) {
  return (
    <li className="flex h-[51px] shrink-0 items-center border-b border-[#e2e2e2] pl-[14px] pr-[14px] first:h-[50px]">
      <span>{row.name}</span>
      {row.active && (
        <svg width="16" height="16" viewBox="0 0 16 16" className="ml-[11px]">
          <circle cx="7.3" cy="8" r="7" fill={DARK} />
          <path d="M3.8 7.5 L7 10.5 L13.5 4" stroke="#f7f7f7" strokeWidth="2.3" fill="none" />
        </svg>
      )}
      <div className="ml-auto flex items-center">
        {row.active && <div className="mr-[14px]"><IconButton><Tools /></IconButton></div>}
        <IconButton>
          {row.active ? (
            <span className="size-[8px] bg-[#222]" />
          ) : (
            <svg width="10" height="12" viewBox="0 0 10 12" className="ml-[1px]"><path d="M0.5 0.5 L10 6 L0.5 11.5Z" fill={DARK} /></svg>
          )}
        </IconButton>
        <div className="ml-[13px] w-[22px]">{!row.open && <WifiLock size={16} color={DARK} />}</div>
        <Wifi size={16} color={DARK} weak={row.weak} />
      </div>
    </li>
  );
}

function NetworkWindow() {
  return (
    <section className="absolute left-[560px] top-[252px] flex h-[563px] w-[800px] flex-col bg-[#d6d6d6] text-[14.67px] text-[#222] shadow-[0_4px_14px_rgba(0,0,0,0.6)]">
      <div className="relative flex h-[32px] items-start justify-center border-t border-[#444] bg-[#2f2f2f] text-[#d9d9d9]">
        <h1 className="pl-px font-bold leading-[31px]">Sieć</h1>
        <div className="absolute right-[10px] top-[8px] flex items-center">
          <span className="mr-[24px] h-[2px] w-[6px] bg-[#999]" />
          <svg width="7" height="7" viewBox="0 0 7 7" className="mr-[19px]" fill="#999">
            <path d="M2.5 0 H6.5 V4Z M0 2.8 V6.5 H3.8Z" />
          </svg>
          <svg width="14" height="14" viewBox="0 0 14 14">
            <circle cx="7" cy="7" r="7" fill="#3a74b5" />
            <path d="M4.5 4.5 L9.5 9.5 M9.5 4.5 L4.5 9.5" stroke="#262b31" strokeWidth="1.9" />
          </svg>
        </div>
      </div>
      <div className="flex h-[46px] shrink-0 items-start border-b border-[#979797] bg-linear-to-b from-[#d6d6d6] to-[#bebebe] pl-[8px] pt-[5px]">
        <button className={`${BTN} h-[33px] w-[30px]`}>
          <svg width="12" height="11" viewBox="0 0 12 11" className="mb-[2px]"><path d="M0 5.5 L6.5 0 V3 H12 V8 H6.5 V11Z" fill="#3f3f3f" /></svg>
        </button>
      </div>
      <div className="flex flex-1 px-[24px] pt-[28px]">
        <div className="flex h-[409px] w-[200px] shrink-0 flex-col overflow-hidden rounded-b-[3px] border border-[#999] bg-[#f7f7f7]">
          <div className="flex h-[38px] items-center gap-[10px] border-b border-t border-b-[#4c8577] border-t-[#5a9787] bg-linear-to-b from-[#5dac9b] to-[#528f81] pl-[14px] text-[#f5f5f5]">
            <Wifi size={16} color="#f5f5f5" />
            <span className="pb-[2px] tracking-[0.1px]">Wi-Fi</span>
          </div>
          <div className="flex h-[38px] items-center gap-[10px] pl-[14px]">
            <Plug />
            <span className="pb-[2px]">Wired</span>
          </div>
          <div className="flex h-[38px] items-center gap-[10px] pl-[14px]">
            <Screens size={16} color={DARK} bg="#f7f7f7" />
            <span className="pb-[2px] tracking-[0.1px]">Pośrednik sieciowy</span>
          </div>
          <div className="mt-auto flex h-[33px] items-center border-t border-[#999] bg-linear-to-b from-[#c6c6c6] to-[#d4d4d4] pl-[3px]">
            <button className={`${BTN} h-[26px] w-[25px] rounded-r-none`}>
              <svg width="10" height="10" viewBox="0 0 10 10"><path d="M0 5 H10 M5 0 V10" stroke={DARK} strokeWidth="2" /></svg>
            </button>
            <button className="flex h-[26px] w-[25px] items-center justify-center rounded-r-[3px] border border-l-0 border-[#aaa] bg-[#cfcfcf]">
              <span className="h-[2px] w-[10px] bg-[#8a8a8a]" />
            </button>
          </div>
        </div>
        <div className="ml-[18px] w-[534px] shrink-0">
          <div className="flex h-[58px] items-start justify-between">
            <div>
              <h2 className="text-[17.6px] font-bold leading-[24px] tracking-[0.1px]">Wi-Fi</h2>
              <p className="leading-[23px]">Połączone</p>
            </div>
            <div className="mr-[1px] mt-[12px] flex h-[21px] w-[72px] overflow-hidden rounded-[3px] border border-[#8e8e8e]">
              <div className="flex w-[35px] items-center justify-center bg-linear-to-b from-[#4d8a7d] to-[#5dac9b]">
                <span className="ml-[-2px] mt-[2px] h-[13px] w-px bg-[#eef7f4]" />
              </div>
              <div className="flex-1 border-l border-[#8e8e8e] bg-linear-to-b from-[#fafafa] to-[#dcdcdc]" />
            </div>
          </div>
          <div className="flex h-[300px] border border-[#999] bg-[#f7f7f7]">
            <ul className="flex h-[298px] flex-1 flex-col overflow-hidden">
              {ROWS.map((r) => <NetworkRow key={r.name} row={r} />)}
            </ul>
            <div className="h-full w-[14px] border-l border-[#a5a5a5] bg-linear-to-r from-[#cdcdcd] to-[#e9e9e9] pl-[1px] pt-[2px]">
              <div className="h-[215px] w-[10px] rounded-full border border-[#8f8f8f] bg-linear-to-r from-[#f0f0f0] to-[#d2d2d2]" />
            </div>
          </div>
          <div className="mt-[19px] flex items-center pl-[1px]">
            <button className={`${BTN} h-[31px] w-[92px] pb-[2px]`}>Znane sieci</button>
            <button className={`${BTN} ml-[19px] h-[31px] w-[160px] pb-[2px]`}>Połącz z ukrytą siecią</button>
            <button className={`${BTN} ml-[20px] h-[31px] w-[241px] pb-[2px]`}>Utwórz bezprzewodowy Hotspot</button>
          </div>
        </div>
      </div>
    </section>
  );
}

export default function App() {
  return (
    <main className="relative h-[1080px] w-[1920px] overflow-hidden whitespace-nowrap bg-[#010101] font-['Noto_Sans',sans-serif]">
      <div className="absolute left-[885px] top-[815px] h-[130px] w-[130px] bg-linear-to-b from-[#0d0802] to-transparent" />
      {ITEMS.map((item) => <DesktopItem key={item.lines.join(" ")} item={item} />)}
      <Panel />
      <AppletMenu />
      <NetworkWindow />
    </main>
  );
}
